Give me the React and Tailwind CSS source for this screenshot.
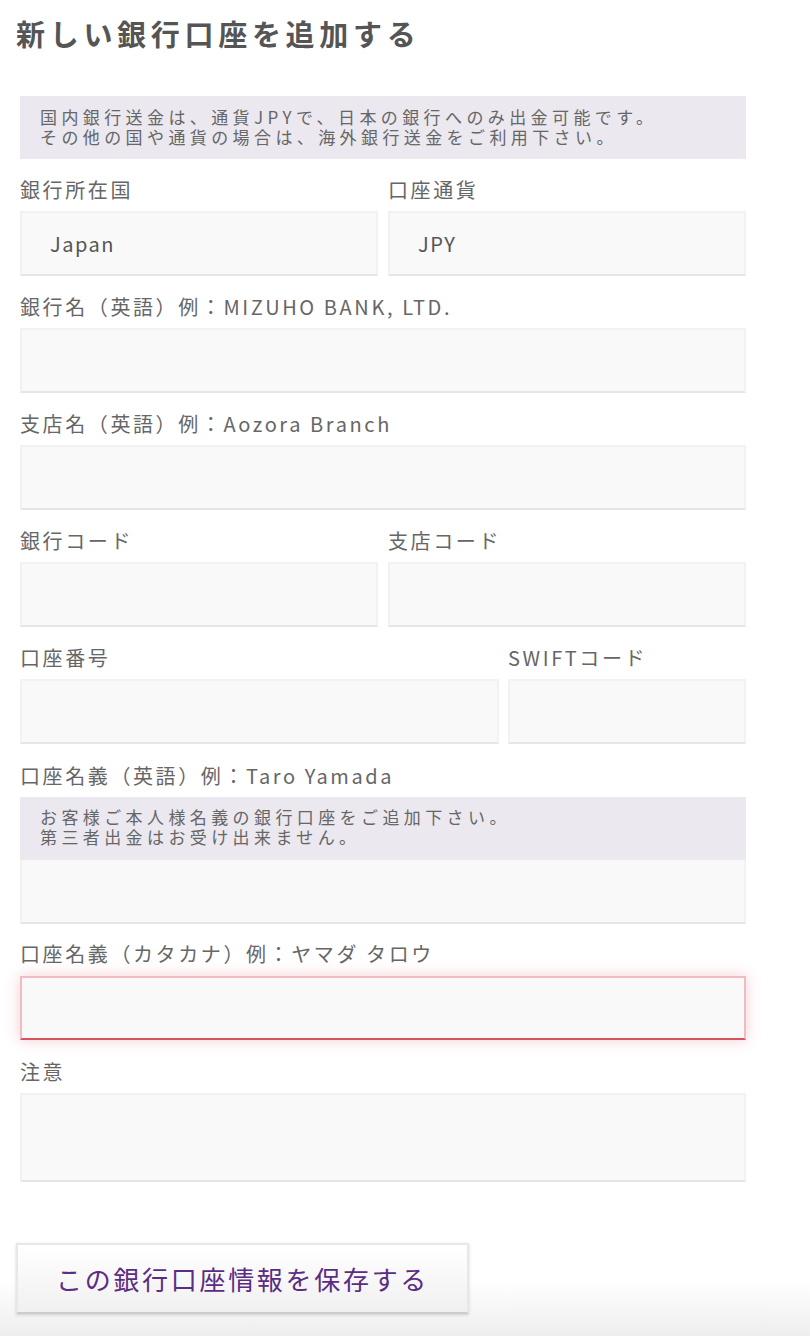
import React from "react";

const font = { fontFamily: '"Noto Sans CJK JP", "Noto Sans", sans-serif' };

function Label({ children }) {
  return (
    <div className="h-[24px] leading-[24px] text-[20px] tracking-[2.6px] text-[#666] mb-[9px] whitespace-nowrap">
      {children}
    </div>
  );
}

function Input({ value, className = "" }) {
  return (
    <div
      className={
        "h-[65px] bg-[#f9f9f9] border-2 border-[#f2f2f2] border-b-[#e6e6e6] flex items-center pl-[28px] text-[20px] tracking-[1.5px] text-[#555] " +
        className
      }
    >
      {value}
    </div>
  );
}

function Field({ label, value }) {
  return (
    <div className="mb-[19px]">
      <Label>{label}</Label>
      <Input value={value} />
    </div>
  );
}

export default function App() {
  return (
    <div
      style={font}
      className="w-[810px] min-h-[1336px] bg-[linear-gradient(to_bottom,#ffffff_0px,#ffffff_1280px,#eeeeee_1336px)] pl-[16px] pt-[14px]"
    >
      <h1 className="text-[29px] leading-[38px] font-bold tracking-[4.7px] text-[#555]">
        新しい銀行口座を追加する
      </h1>

      <div className="ml-[4px] w-[726px] mt-[44px]">
        <div className="bg-[#ebe8ef] pl-[20px] pt-[11px] pb-[12px] text-[17px] leading-[20px] tracking-[4.4px] text-[#666] mb-[19px]">
          <div>国内銀行送金は、通貨JPYで、日本の銀行へのみ出金可能です。</div>
          <div>その他の国や通貨の場合は、海外銀行送金をご利用下さい。</div>
        </div>

        <div className="grid grid-cols-2 gap-x-[10px]">
          <Field label="銀行所在国" value="Japan" />
          <Field label="口座通貨" value="JPY" />
        </div>

        <Field label="銀行名（英語）例：MIZUHO BANK, LTD." />
        <Field label="支店名（英語）例：Aozora Branch" />

        <div className="grid grid-cols-2 gap-x-[10px]">
          <Field label="銀行コード" />
          <Field label="支店コード" />
        </div>

        <div className="grid grid-cols-[479px_1fr] gap-x-[9px]">
          <Field label="口座番号" />
          <Field label="SWIFTコード" />
        </div>

        <div className="mb-[18px]">
          <div className="mt-[1px]">
            <Label>口座名義（英語）例：Taro Yamada</Label>
          </div>
          <div className="bg-[#ebe8ef] pl-[20px] pt-[10px] pb-[13px] text-[17px] leading-[20px] tracking-[4.4px] text-[#666]">
            <div>お客様ご本人様名義の銀行口座をご追加下さい。</div>
            <div>第三者出金はお受け出来ません。</div>
          </div>
          <div className="h-[64px] bg-[#f9f9f9] border-2 border-t-0 border-[#f2f2f2] border-b-[#e6e6e6]" />
        </div>

        <div className="mb-[20px]">
          <Label>口座名義（カタカナ）例：ヤマダ タロウ</Label>
          <div className="mt-[10px] h-[64px] bg-[#f9f9f9] border-2 border-[#f0bcc2] border-b-[#d9505f] shadow-[0_0_14px_rgba(220,80,95,0.28)]" />
        </div>

        <div>
          <Label>注意</Label>
          <div className="h-[89px] bg-[#f9f9f9] border-2 border-[#f2f2f2] border-b-[#e6e6e6]" />
        </div>
      </div>

      <button
        style={font}
        className="mt-[61px] w-[453px] h-[71px] border-2 border-[#e8e8e8] border-b-[#cccccc] bg-[linear-gradient(to_bottom,#ffffff,#f0f0f0)] shadow-[0_1px_3px_rgba(0,0,0,0.15)] text-[26px] tracking-[2.7px] text-[#5b2c83] flex items-center justify-center"
      >
        この銀行口座情報を保存する
      </button>
    </div>
  );
}
